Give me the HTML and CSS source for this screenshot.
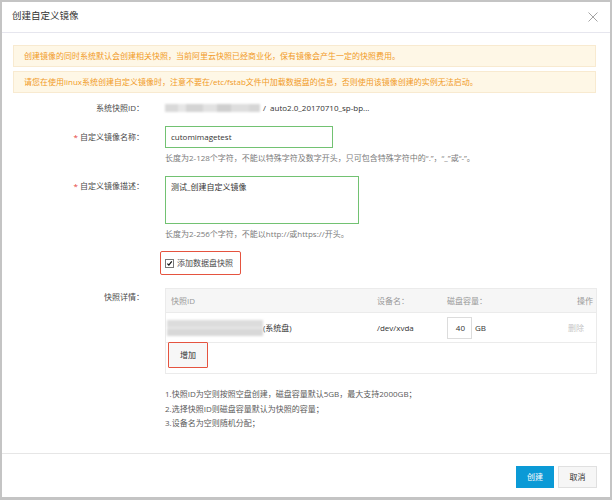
FILE: index.html
```html
<!DOCTYPE html>
<html lang="zh-CN">
<head>
<meta charset="utf-8">
<title>创建自定义镜像</title>
<link rel="stylesheet" href="styles.css">
</head>
<body>
<div class="frame">
  <div class="dialog">
    <div class="header">
      <div class="title">创建自定义镜像</div>
      <svg class="close" width="10" height="10" viewBox="0 0 10 10"><path d="M0.5 0.5L9.5 9.5M9.5 0.5L0.5 9.5" stroke="#9a9a9a" stroke-width="0.9" fill="none"/></svg>
    </div>
    <div class="body">
      <div class="alert">创建镜像的同时系统默认会创建相关快照，当前阿里云快照已经商业化，保有镜像会产生一定的快照费用。</div>
      <div class="alert">请您在使用linux系统创建自定义镜像时，注意不要在/etc/fstab文件中加载数据盘的信息，否则使用该镜像创建的实例无法启动。</div>

      <div class="row row-id">
        <div class="label">系统快照ID：</div>
        <div class="value"><span class="blur blur-id"></span><span class="id-text">/ &nbsp;auto2.0_20170710_sp-bp...</span></div>
      </div>

      <div class="row row-name">
        <div class="label label-mid"><span class="req">*</span> 自定义镜像名称：</div>
        <div class="input input-name">cutomimagetest</div>
      </div>
      <div class="row row-hint1">
        <div></div>
        <div class="hint">长度为2-128个字符，不能以特殊字符及数字开头，只可包含特殊字符中的“.”，“_”或“-”。</div>
      </div>

      <div class="row row-desc">
        <div class="label label-top"><span class="req">*</span> 自定义镜像描述：</div>
        <div class="input textarea">测试_创建自定义镜像</div>
      </div>
      <div class="row row-hint2">
        <div></div>
        <div class="hint">长度为2-256个字符，不能以http://或https://开头。</div>
      </div>

      <div class="row row-check">
        <div></div>
        <div><span class="check-box"><span class="checkbox"><svg width="9" height="9" viewBox="0 0 9 9"><path d="M1.8 4.6L3.7 6.6L7.4 1.8" stroke="#111" stroke-width="1.6" fill="none"/></svg></span><span class="check-label">添加数据盘快照</span></span></div>
      </div>

      <div class="row row-table">
        <div class="label label-table">快照详情：</div>
        <div class="table">
          <div class="tr thead">
            <div class="c1">快照ID</div>
            <div class="c2">设备名：</div>
            <div class="c3">磁盘容量：</div>
            <div class="c4">操作</div>
          </div>
          <div class="tr tbody">
            <div class="c1 id-cell"><span class="blur blur-snap"></span><span>(系统盘)</span></div>
            <div class="c2 dark">/dev/xvda</div>
            <div class="c3"><span class="size-input">40</span><span class="dark">GB</span></div>
            <div class="c4 del">删除</div>
          </div>
          <div class="tr tadd">
            <span class="add-btn">增加</span>
          </div>
        </div>
      </div>

      <div class="row row-notes">
        <div></div>
        <div class="notes">
          <div>1.快照ID为空则按照空盘创建，磁盘容量默认5GB，最大支持2000GB；</div>
          <div>2.选择快照ID则磁盘容量默认为快照的容量；</div>
          <div>3.设备名为空则随机分配；</div>
        </div>
      </div>
    </div>
    <div class="footer">
      <span class="btn btn-primary">创建</span>
      <span class="btn btn-default">取消</span>
    </div>
  </div>
</div>
</body>
</html>
```
FILE: styles.css
```css
* { box-sizing: border-box; }
html, body { margin: 0; padding: 0; }
body {
  background: #c4c4c4;
  font-family: "Open Sans", "Noto Sans CJK SC", sans-serif;
  font-size: 8px;
  color: #555;
}
.frame {
  padding: 2px 2px 3px 2px;
  width: 612px;
  height: 500px;
}
.dialog {
  width: 608px;
  height: 495px;
  background: #fff;
  display: flex;
  flex-direction: column;
}
.header {
  height: 31px;
  border-bottom: 1px solid #e6e6ee;
  display: flex;
  align-items: center;
  justify-content: space-between;
  padding: 0 12px 2px 10px;
}
.title {
  font-size: 9.5px;
  color: #333;
  line-height: 14px;
}
.close { display: block; margin-top: 2px; }
.body {
  flex: 1;
  padding: 12px 14px 0 11px;
}
.alert {
  height: 22px;
  line-height: 20px;
  background: #fef7e6;
  border: 1px solid #f8ead0;
  color: #f19a27;
  padding-left: 10px;
  margin-bottom: 4px;
  white-space: nowrap;
}
.row {
  display: grid;
  grid-template-columns: 131px 1fr;
  column-gap: 21px;
}
.label {
  text-align: right;
  color: #4a4a4a;
  line-height: 14px;
  white-space: nowrap;
}
.req { color: #e64340; }
.row-id { margin-top: 8px; line-height: 14px; }
.value { display: flex; align-items: center; color: #333; line-height: 14px; }
.blur {
  display: inline-block;
  filter: blur(1px);
}
.blur-id {
  width: 95px;
  height: 8px;
  background: linear-gradient(90deg, #d9d9d9 0 14%, #e6e6e6 14% 22%, #d4d4d4 22% 40%, #e2e2e2 40% 55%, #cfcfcf 55% 70%, #dedede 70% 88%, #d6d6d6 88% 100%);
  margin-right: 3px;
}
.row-name { margin-top: 11px; }
.label-mid { line-height: 22px; }
.input {
  border: 1px solid #72c272;
  color: #333;
  padding-left: 5px;
}
.input-name {
  width: 168px;
  height: 22px;
  line-height: 20px;
}
.row-hint1 { margin-top: 3px; }
.hint { color: #7a7a7a; line-height: 14px; white-space: nowrap; }
.row-desc { margin-top: 11px; }
.label-top { padding-top: 3px; }
.textarea {
  width: 194px;
  height: 48px;
  line-height: 14px;
  padding-top: 3px;
}
.row-hint2 { margin-top: 3px; }
.row-check { margin-top: 10px; }
.check-box {
  display: inline-flex;
  align-items: center;
  height: 24px;
  width: 81px;
  margin-left: -5px;
  border: 1.5px solid #e5533f;
  border-radius: 2px;
  padding-left: 4px;
}
.checkbox {
  width: 9px;
  height: 9px;
  border: 1px solid #777;
  background: #fff;
  display: inline-flex;
  align-items: center;
  justify-content: center;
  margin-right: 3px;
}
.checkbox svg { display: block; }
.check-label { color: #4a4a4a; line-height: 14px; }
.row-table { margin-top: 13px; }
.label-table { padding-top: 2px; }
.table {
  width: 432px;
  border: 1px solid #ebebeb;
}
.tr {
  display: grid;
  grid-template-columns: 211px 70px 1fr auto;
  align-items: center;
}
.thead {
  height: 24px;
  background: #f6f6f6;
  border-bottom: 1px solid #ebebeb;
  color: #999;
}
.thead .c1 { padding-left: 5px; }
.thead .c4 { padding-right: 3px; }
.tbody {
  height: 30px;
  border-bottom: 1px solid #ebebeb;
  color: #333;
}
.id-cell { display: flex; align-items: center; padding-left: 1px; }
.blur-snap {
  width: 96px;
  height: 16px;
  background: linear-gradient(180deg, #dcdcdc 0 45%, #e7e7e7 45% 55%, #d8d8d8 55% 100%);
  filter: blur(1.2px);
}
.dark { color: #333; }
.c3 { display: flex; align-items: center; }
.size-input {
  width: 25px;
  height: 22px;
  border: 1px solid #dcdcdc;
  text-align: right;
  padding-right: 6px;
  line-height: 20px;
  margin-right: 3px;
  color: #333;
}
.del { color: #c6c6c6; padding-right: 12px; }
.tadd {
  display: block;
  height: 30px;
  padding-left: 2px;
}
.add-btn {
  display: inline-block;
  width: 40px;
  height: 26px;
  margin-top: -1px;
  border: 1.5px solid #e5533f;
  border-radius: 1px;
  background: #f7f7f7;
  color: #333;
  text-align: center;
  line-height: 23px;
}
.row-notes { margin-top: 13px; }
.notes { color: #5a5a5a; line-height: 14.5px; }
.footer {
  height: 44px;
  border-top: 1px solid #e6e6e6;
  display: flex;
  justify-content: flex-end;
  align-items: flex-start;
  gap: 4px;
  padding: 12px 13px 0 0;
}
.btn {
  display: inline-block;
  height: 22px;
  line-height: 22px;
  text-align: center;
}
.btn-primary {
  width: 38px;
  background: #0b9ad6;
  color: #fff;
}
.btn-default {
  width: 39px;
  background: #f6f6f6;
  border: 1px solid #e0e0e0;
  line-height: 20px;
  color: #333;
}
```
